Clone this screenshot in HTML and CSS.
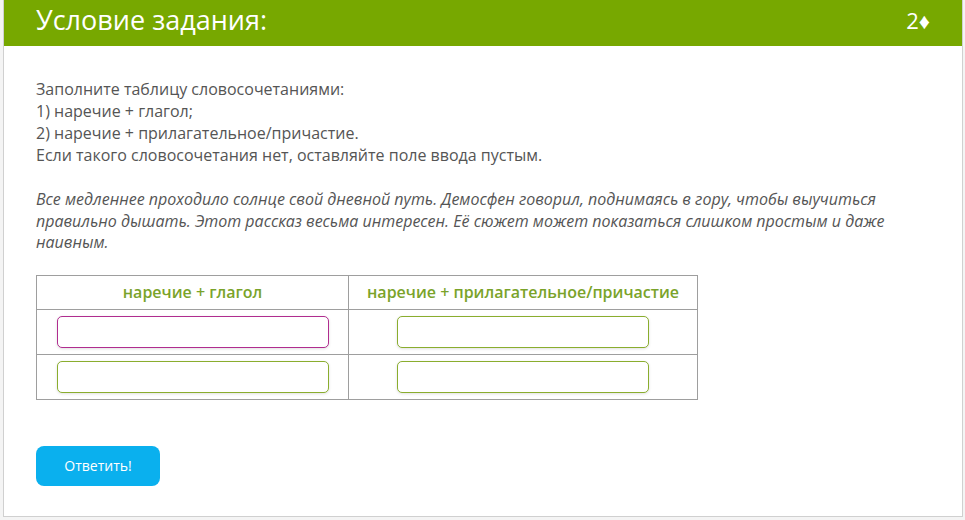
FILE: index.html
```html
<!DOCTYPE html>
<html lang="ru">
<head>
<meta charset="utf-8">
<title>Условие задания</title>
<link rel="stylesheet" href="styles.css">
</head>
<body>
<div class="card">
  <div class="card-head">
    <h1 class="title">Условие задания:</h1>
    <span class="points">2♦</span>
  </div>
  <div class="card-body">
    <p class="task">Заполните таблицу словосочетаниями:<br>1) наречие + глагол;<br>2) наречие + прилагательное/причастие.<br>Если такого словосочетания нет, оставляйте поле ввода пустым.</p>
    <p class="quote">Все медленнее проходило солнце свой дневной путь. Демосфен говорил, поднимаясь в гору, чтобы выучиться правильно дышать. Этот рассказ весьма интересен. Её сюжет может показаться слишком простым и даже наивным.</p>
    <table class="grid">
      <thead>
        <tr><th class="c1">наречие + глагол</th><th class="c2">наречие + прилагательное/причастие</th></tr>
      </thead>
      <tbody>
        <tr><td><input class="field field-left active" type="text"></td><td><input class="field field-right" type="text"></td></tr>
        <tr><td><input class="field field-left" type="text"></td><td><input class="field field-right" type="text"></td></tr>
      </tbody>
    </table>
    <button class="answer" type="button">Ответить!</button>
  </div>
</div>
</body>
</html>
```

FILE: styles.css
```css
html, body {
  margin: 0;
  padding: 0;
  background: #f4f4f4;
}
body {
  font-family: "Open Sans", "Noto Sans", sans-serif;
  color: #555;
}
.card {
  margin-left: 3px;
  width: 958px;
  height: 516px;
  background: #fff;
  border-left: 1px solid #d0d0d0;
  border-right: 1px solid #d0d0d0;
  border-bottom: 1px solid #d0d0d0;
}
.card-head {
  height: 46px;
  background: #77a800;
  display: flex;
  align-items: center;
  justify-content: space-between;
  padding: 0 32px 0 32px;
  color: #fff;
}
.title {
  margin: 0;
  font-size: 27px;
  font-weight: 400;
  line-height: 46px;
  position: relative;
  top: -3px;
}
.points {
  font-size: 22px;
  line-height: 46px;
  position: relative;
  top: -3px;
}
.card-body {
  padding: 32px 20px 0 32px;
}
.task {
  margin: 0;
  font-size: 16px;
  line-height: 22px;
}
.quote {
  margin: 23px 0 0 0;
  font-size: 16px;
  line-height: 21.5px;
  font-style: italic;
}
.grid {
  margin-top: 21px;
  border-collapse: collapse;
  width: 662px;
}
.grid th, .grid td {
  border: 1px solid #9e9e9e;
  text-align: center;
  padding: 0;
}
.grid th {
  height: 33px;
  color: #7aa32a;
  font-size: 16px;
  font-weight: 600;
}
.grid .c1 { width: 311px; }
.grid td { height: 44px; }
.field {
  display: block;
  margin: 0 auto;
  box-sizing: border-box;
  height: 32px;
  border: 1px solid #8aad2e;
  border-radius: 5px;
  background: #fff;
  box-shadow: 0 1px 3px rgba(0,0,0,0.12);
  outline: none;
}
.field-left { width: 272px; }
.field-right { width: 252px; }
.field.active { border-color: #b02d8f; }
.answer {
  margin-top: 46px;
  width: 124px;
  height: 40px;
  border: none;
  border-radius: 8px;
  background: #0ab0ee;
  color: #fff;
  font-family: "Open Sans", "Noto Sans", sans-serif;
  font-size: 14px;
  padding: 0;
}
```
